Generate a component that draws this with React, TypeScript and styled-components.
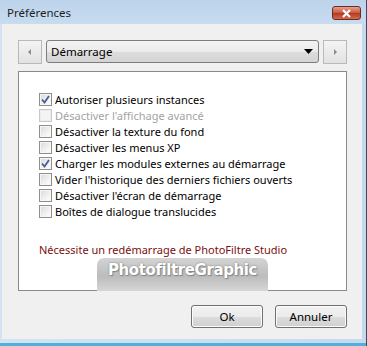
import React from 'react';
import styled, { createGlobalStyle } from 'styled-components';

const GlobalStyle = createGlobalStyle`
  html, body {
    margin: 0;
    padding: 0;
    background: #ffffff;
  }
  body {
    font-family: "Noto Sans", "Open Sans", Arial, sans-serif;
    font-size: 11px;
  }
`;

const Window = styled.div`
  width: 367px;
  height: 346px;
  box-sizing: border-box;
  display: flex;
  flex-direction: column;
  background: #c4d9ee;
  border-right: 1px solid #3b4a5c;
  overflow: hidden;
`;

const TitleBar = styled.div`
  height: 24px;
  display: flex;
  align-items: center;
  justify-content: space-between;
  padding: 0 5px 0 7px;
  background: linear-gradient(#bcd3ea, #c8dcf0);
  color: #1e1e1e;
  font-size: 11.5px;
  flex-shrink: 0;
`;

const CloseButton = styled.div`
  width: 27px;
  height: 12px;
  margin-top: 2px;
  border: 1px solid #6b2b22;
  border-radius: 3px;
  background: linear-gradient(#e6a18f, #c9553f 50%, #b2391f 51%, #cf6a4e);
  display: flex;
  align-items: center;
  justify-content: center;
`;

const Frame = styled.div`
  flex: 1;
  display: flex;
  padding: 0 4px 4px 2px;
  background: linear-gradient(90deg, #d3e3f2, #c6daee);
  border-bottom: 3px solid #4fb0dc;
`;

const Client = styled.div`
  flex: 1;
  display: flex;
  flex-direction: column;
  background: #f0f0f0;
  padding: 16px 15px 0 16px;
`;

const NavRow = styled.div`
  display: flex;
  gap: 4px;
  height: 24px;
`;

const ArrowButton = styled.div`
  width: 24px;
  height: 24px;
  box-sizing: border-box;
  border: 1px solid #b9b9b9;
  background: linear-gradient(#f4f4f4, #e2e2e2);
  display: flex;
  align-items: center;
  justify-content: center;
`;

const Combo = styled.div`
  flex: 1;
  height: 23px;
  box-sizing: border-box;
  border: 1px solid #7d7d7d;
  border-radius: 3px;
  background: linear-gradient(#f3f3f3 0%, #ebebeb 50%, #dddddd 51%, #d4d4d4 100%);
  display: flex;
  align-items: center;
  justify-content: space-between;
  padding: 0 5px 0 4px;
  color: #000;
  font-size: 11.5px;
`;

const Panel = styled.div`
  position: relative;
  margin-top: 7px;
  height: 220px;
  box-sizing: border-box;
  border: 1px solid #8a8a8a;
  background: #ffffff;
  padding: 19px 0 0 20px;
`;

const OptionRow = styled.label<{ $disabled?: boolean }>`
  display: flex;
  align-items: center;
  height: 16px;
  gap: 3px;
  color: ${(p) => (p.$disabled ? '#a3a3a3' : '#000000')};
  white-space: nowrap;
`;

const Box = styled.span<{ $disabled?: boolean }>`
  width: 13px;
  height: 13px;
  box-sizing: border-box;
  border: 1px solid ${(p) => (p.$disabled ? '#c8c8c8' : '#8e8f8f')};
  background: ${(p) =>
    p.$disabled
      ? '#f4f4f4'
      : 'linear-gradient(135deg, #d8d8d8, #f2f2f2 60%, #ffffff)'};
  box-shadow: inset 0 0 0 1px ${(p) => (p.$disabled ? '#ececec' : '#f6f6f6')};
  display: flex;
  align-items: center;
  justify-content: center;
  flex-shrink: 0;
`;

const Notice = styled.div`
  margin-top: 23px;
  color: #7c0f0f;
`;

const Watermark = styled.div`
  position: absolute;
  left: 78px;
  bottom: -1px;
  width: 171px;
  height: 33px;
  border-radius: 7px 7px 0 0;
  background: linear-gradient(#d4d4d4, #bcbcbc 55%, #d6d6d6);
  display: flex;
  align-items: flex-start;
  justify-content: center;
  padding-top: 3px;
  box-sizing: border-box;
  color: #ffffff;
  font-family: "DejaVu Sans", "Liberation Sans", sans-serif;
  font-weight: bold;
  font-size: 15px;
  letter-spacing: -0.4px;
  text-shadow: 0 0 2px #7a7a7a, 1px 1px 1px #8a8a8a;
`;

const Footer = styled.div`
  display: flex;
  justify-content: flex-end;
  gap: 12px;
  margin-top: 14px;
`;

const Button = styled.div`
  width: 72px;
  height: 23px;
  box-sizing: border-box;
  border: 1px solid #707070;
  border-radius: 3px;
  background: linear-gradient(#f2f2f2 0%, #ebebeb 50%, #dddddd 51%, #cfcfcf 100%);
  box-shadow: inset 0 0 0 1px #fcfcfc;
  display: flex;
  align-items: center;
  justify-content: center;
  color: #000;
  font-size: 11.5px;
`;

const Check = () => (
  <svg width="9" height="9" viewBox="0 0 9 9">
    <path d="M1 4.5 L3.5 7.5 L8 1" fill="none" stroke="#4a5e94" strokeWidth="1.8" />
  </svg>
);

const options: { label: string; checked?: boolean; disabled?: boolean }[] = [
  { label: 'Autoriser plusieurs instances', checked: true },
  { label: "Désactiver l'affichage avancé", disabled: true },
  { label: 'Désactiver la texture du fond' },
  { label: 'Désactiver les menus XP' },
  { label: 'Charger les modules externes au démarrage', checked: true },
  { label: "Vider l'historique des derniers fichiers ouverts" },
  { label: "Désactiver l'écran de démarrage" },
  { label: 'Boîtes de dialogue translucides' },
];

const App = () => {
  return (
    <>
      <GlobalStyle />
      <Window>
        <TitleBar>
          <span>Préférences</span>
          <CloseButton>
            <svg width="11" height="9" viewBox="0 0 11 9">
              <path d="M2 1 L9 8 M9 1 L2 8" stroke="#ffffff" strokeWidth="2.2" />
            </svg>
          </CloseButton>
        </TitleBar>
        <Frame>
          <Client>
            <NavRow>
              <ArrowButton>
                <svg width="4" height="6" viewBox="0 0 4 6">
                  <path d="M3 0 L0 3 L3 6 Z" fill="#8c8c8c" />
                </svg>
              </ArrowButton>
              <Combo>
                <span>Démarrage</span>
                <svg width="9" height="5" viewBox="0 0 9 5">
                  <path d="M0 0 L9 0 L4.5 5 Z" fill="#000" />
                </svg>
              </Combo>
              <ArrowButton>
                <svg width="4" height="6" viewBox="0 0 4 6">
                  <path d="M1 0 L4 3 L1 6 Z" fill="#8c8c8c" />
                </svg>
              </ArrowButton>
            </NavRow>
            <Panel>
              {options.map((o) => (
                <OptionRow key={o.label} $disabled={o.disabled}>
                  <Box $disabled={o.disabled}>{o.checked && <Check />}</Box>
                  {o.label}
                </OptionRow>
              ))}
              <Notice>Nécessite un redémarrage de PhotoFiltre Studio</Notice>
              <Watermark>PhotofiltreGraphic</Watermark>
            </Panel>
            <Footer>
              <Button>Ok</Button>
              <Button>Annuler</Button>
            </Footer>
          </Client>
        </Frame>
      </Window>
    </>
  );
};

export default App;
